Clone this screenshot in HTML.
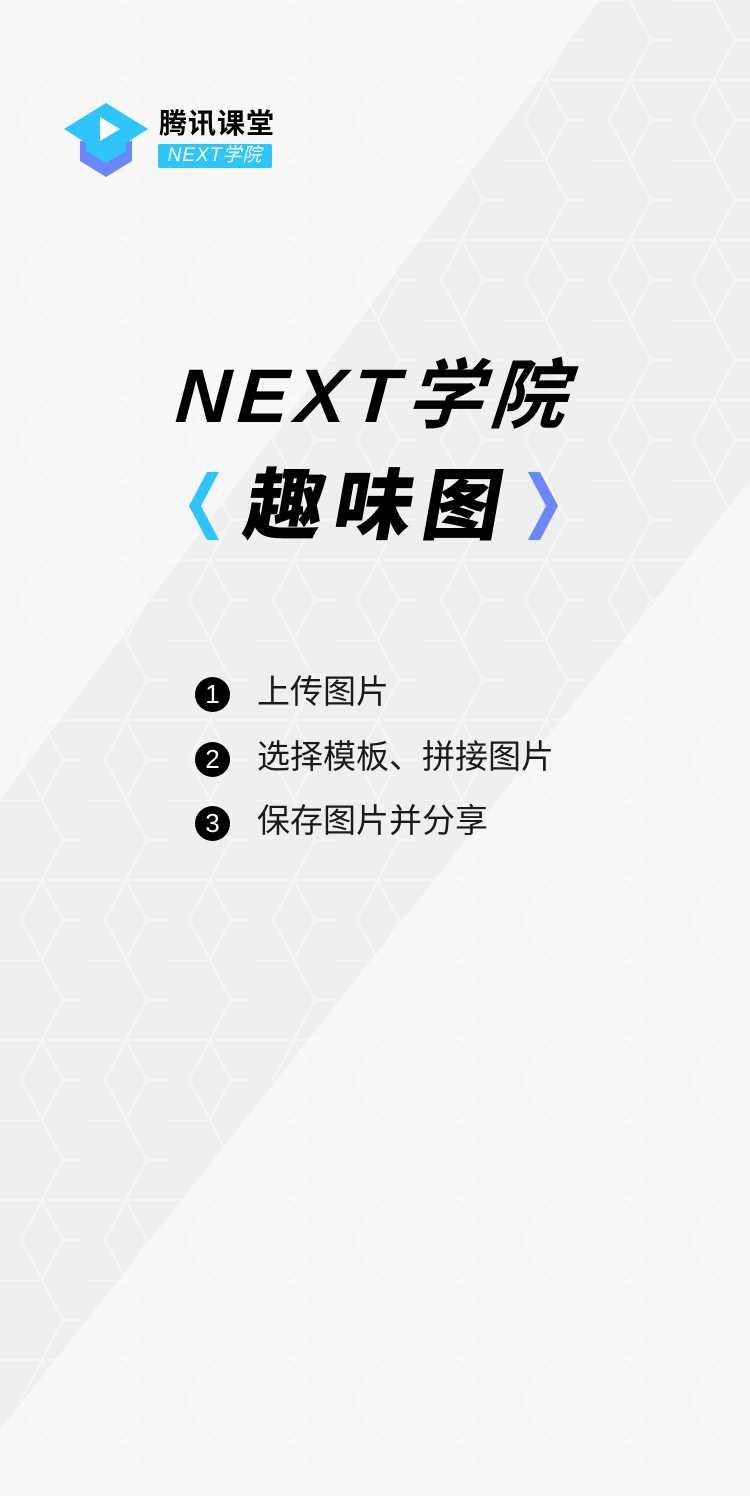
<!DOCTYPE html>
<html><head><meta charset="utf-8">
<style>
html,body{margin:0;padding:0}
body{width:750px;height:1496px;position:relative;overflow:hidden;background:#f7f7f7;font-family:"Liberation Sans","Noto Sans CJK SC",sans-serif}
.abs{position:absolute}
.t1{left:176px;top:352px;font-size:76px;font-weight:bold;font-style:italic;color:#000;letter-spacing:7px;line-height:90px;white-space:nowrap;transform:skewX(-4deg)}
.t2{left:246px;top:458px;font-size:78px;font-weight:900;color:#000;letter-spacing:11px;line-height:96px;white-space:nowrap;transform:skewX(-10deg)}
.item{left:195px;height:40px;line-height:40px;font-size:33px;color:#1a1a1a;white-space:nowrap}
.item span.n{display:inline-block;width:35px;height:35px;border-radius:50%;background:#000;color:#fff;font-size:26px;line-height:35px;text-align:center;vertical-align:middle;margin-right:27px;font-family:"Liberation Sans",sans-serif}
</style></head><body>
<svg class="abs" style="left:0;top:0" width="750" height="1496">
<defs>
<pattern id="hx" width="84" height="160" patternUnits="userSpaceOnUse">
<path d="M0 0 L42 0 L63 40 L42 80 L0 80 L-21 40 Z M42 80 L63 120 L42 160 M63 40 L84 40 M63 120 L84 120 M84 40 L105 80 L84 120" fill="none" stroke="#fff" stroke-width="1.6"/>
<path d="M42 80 L84 80 L105 120 L84 160 M42 80 L21 120 L42 160" fill="none" stroke="#fff" stroke-width="1.6"/>
</pattern>
</defs>
<polygon points="600,0 750,0 750,480 0,1430 0,800" fill="#efefef"/>
<rect width="750" height="1496" fill="url(#hx)" opacity="0.5"/>
</svg>
<svg class="abs" style="left:64px;top:101px" width="90" height="78" viewBox="0 0 90 78">
<path d="M16 40 L16 60 L42 76 L68 60 L68 40 Z" fill="#6a87fb"/>
<path d="M0 28 L42 2 L84 28 L62 42 L62 50 L42 62 L22 50 L22 42 Z" fill="#2ec5fb"/>
<path d="M36 16 L36 40 L56 28 Z" fill="#fff"/>
</svg>
<div class="abs" style="left:159px;top:106px;font-size:28px;font-weight:bold;color:#000;line-height:36px;letter-spacing:1px">腾讯课堂</div>
<div class="abs" style="left:158px;top:144px;width:114px;height:24px;background:#2ec5fb;border-radius:2px;color:#fff;font-size:19px;font-style:italic;line-height:24px;text-align:center;letter-spacing:1px">NEXT学院</div>
<div class="abs t1">NEXT学院</div>
<svg class="abs" style="left:185px;top:470px" width="40" height="72"><path d="M22 2 L34 2 L16 36 L34 70 L22 70 L4 36 Z" fill="#2ec5fb"/></svg>
<div class="abs t2">趣味图</div>
<svg class="abs" style="left:520px;top:470px" width="40" height="72"><path d="M8 2 L20 2 L38 36 L20 70 L8 70 L26 36 Z" fill="#6a87fb"/></svg>
<div class="abs item" style="top:672px"><span class="n">1</span>上传图片</div>
<div class="abs item" style="top:737px"><span class="n">2</span>选择模板、拼接图片</div>
<div class="abs item" style="top:801px"><span class="n">3</span>保存图片并分享</div>
</body></html>
